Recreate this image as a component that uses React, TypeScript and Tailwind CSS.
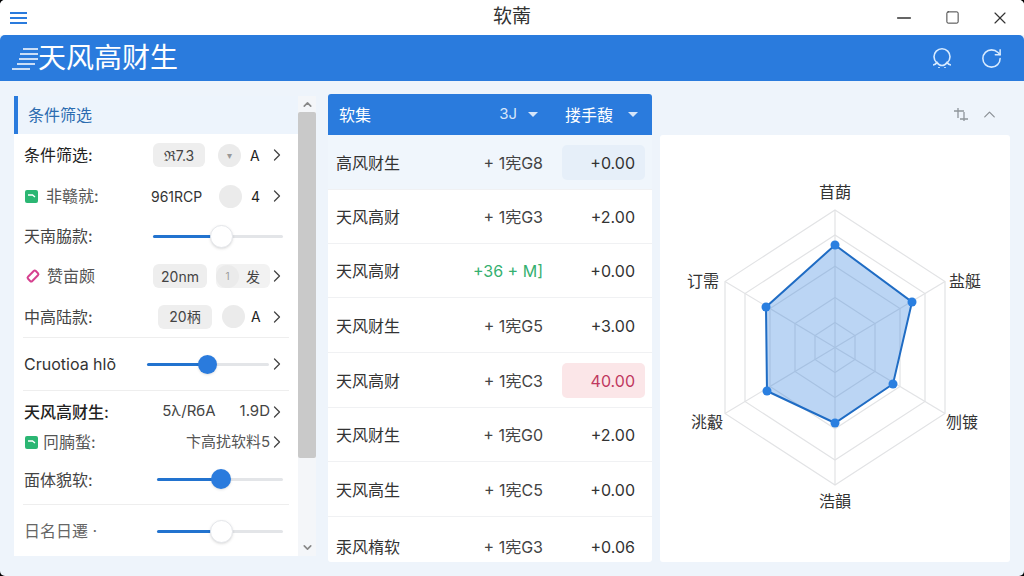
import { ChevronDown, ChevronRight, ChevronUp, Minus, RotateCw, Square, X } from 'lucide-react'

const FONT = "font-['Inter','Noto_Sans_CJK_SC',sans-serif]"

function Slider({ width, fill, thumb }: { width: string; fill: string; thumb: 'white' | 'blue' | 'blueSmall' }) {
  const thumbClass =
    thumb === 'white'
      ? 'w-[23px] h-[23px] -ml-[11px] -mt-[11px] bg-white border border-gray-200 shadow'
      : thumb === 'blue'
        ? 'w-[20px] h-[20px] -ml-[10px] -mt-[10px] bg-[#2a7bdd] shadow'
        : 'w-[19px] h-[19px] -ml-[9px] -mt-[9px] bg-[#2a7bdd] shadow'
  return (
    <div className={`relative h-[3px] rounded-full bg-[#e3e5e8] ${width}`}>
      <div className={`h-[3px] rounded-full bg-[#2273cf] ${fill}`} />
      <div className={`absolute top-[1px] rounded-full ${thumbClass} ${fill === 'w-[68px]' ? 'left-[68px]' : fill === 'w-[60px]' ? 'left-[60px]' : 'left-[64px]'}`} />
    </div>
  )
}

function Pill({ text, w }: { text: string; w: string }) {
  return <div className={`h-[24px] rounded-[6px] bg-[#eeeeee] text-[14px] text-[#444] flex items-center justify-center ${w}`}>{text}</div>
}

function Dot({ children }: { children?: React.ReactNode }) {
  return <div className="w-[23px] h-[23px] rounded-full bg-[#ebebeb] flex items-center justify-center text-[10px] text-[#999]">{children}</div>
}

function Chev() {
  return <ChevronRight className="w-[20px] h-[20px] -mx-[3px] text-[#444]" strokeWidth={1.5} />
}

function GreenIcon() {
  return (
    <svg width="13" height="13" viewBox="0 0 13 13" className="shrink-0">
      <rect width="13" height="13" rx="2" fill="#2bb673" />
      <path d="M3 5h4.5l2.5 2" stroke="#fff" strokeWidth="1.4" fill="none" />
    </svg>
  )
}

function FilterPanel() {
  return (
    <div className="mt-[2px] ml-[14px] w-[302px] h-[460px] flex bg-white overflow-hidden">
      <div className="w-[284px] flex flex-col text-[16px] text-[#333]">
        <div className="h-[38px] shrink-0 border-l-[4px] border-[#2a7bdd] bg-[#edf4fc] pl-[10px] flex items-center text-[#2c6cb0]">条件筛选</div>

        <div className="h-[42px] shrink-0 pl-[10px] pr-[14px] flex items-center">
          <span className="flex-1 text-[#222]">条件筛选:</span>
          <Pill text="ℜ7.3" w="w-[52px]" />
          <div className="ml-[13px] w-[24px]"><Dot>▾</Dot></div>
          <span className="w-[28px] pl-[8px] text-[14px] text-[#222]">A</span>
          <Chev />
        </div>

        <div className="h-[40px] shrink-0 pl-[11px] pr-[14px] flex items-center">
          <GreenIcon />
          <span className="flex-1 ml-[8px] text-[#555]">非赣就:</span>
          <span className="w-[68px] text-[14px] text-[#333]">961RCP</span>
          <Dot />
          <span className="w-[28px] pl-[9px] text-[14px] text-[#222]">4</span>
          <Chev />
        </div>

        <div className="h-[40px] shrink-0 pl-[10px] pr-[15px] flex items-center">
          <span className="flex-1 text-[#444]">天南脇款:</span>
          <Slider width="w-[130px]" fill="w-[68px]" thumb="white" />
        </div>

        <div className="h-[40px] shrink-0 pl-[11px] pr-[14px] flex items-center">
          <svg width="16" height="16" viewBox="0 0 16 16" className="shrink-0">
            <rect x="2.5" y="5" width="11" height="6" rx="1.5" transform="rotate(-45 8 8)" fill="none" stroke="#d6418f" strokeWidth="2" />
          </svg>
          <span className="flex-1 ml-[6px] text-[#555]">赞亩颇</span>
          <Pill text="20nm" w="w-[54px]" />
          <div className="ml-[9px] w-[54px] h-[24px] rounded-[6px] bg-[#f2f2f2] flex items-center">
            <Dot>1</Dot>
            <span className="ml-[7px] text-[14px] text-[#444]">发</span>
          </div>
          <Chev />
        </div>

        <div className="h-[41px] shrink-0 pl-[10px] pr-[14px] flex items-center border-b-0">
          <span className="flex-1 text-[#444]">中高陆款:</span>
          <Pill text="20柄" w="w-[54px]" />
          <div className="ml-[10px]"><Dot /></div>
          <span className="w-[25px] pl-[6px] text-[14px] text-[#222]">A</span>
          <Chev />
        </div>

        <div className="mx-[9px] h-px bg-[#eeeeee] shrink-0" />

        <div className="h-[52px] shrink-0 pl-[10px] pr-[14px] flex items-center">
          <span className="flex-1 text-[#333]">Cruotioa hlõ</span>
          <Slider width="w-[122px]" fill="w-[60px]" thumb="blueSmall" />
          <div className="ml-[1px]"><Chev /></div>
        </div>

        <div className="mx-[9px] h-px bg-[#eeeeee] shrink-0" />

        <div className="h-[41px] shrink-0 pl-[10px] pr-[14px] flex items-center">
          <span className="flex-1 font-medium text-[#222]">天风高财生:</span>
          <span className="text-[15px] text-[#444]">5λ/RбA</span>
          <span className="ml-[24px] text-[15px] text-[#444]">1.9D</span>
          <Chev />
        </div>

        <div className="h-[20px] shrink-0 pl-[11px] pr-[14px] flex items-center">
          <GreenIcon />
          <span className="flex-1 ml-[5px] text-[#555]">冋腩蝵:</span>
          <span className="text-[15px] text-[#555]">卞高扰软料5</span>
          <Chev />
        </div>

        <div className="h-[52px] shrink-0 pt-[3px] pl-[10px] pr-[15px] flex items-center">
          <span className="flex-1 text-[#444]">面体貌软:</span>
          <Slider width="w-[126px]" fill="w-[64px]" thumb="blue" />
        </div>

        <div className="mx-[9px] h-px bg-[#eeeeee] shrink-0" />

        <div className="h-[52px] shrink-0 pl-[10px] pr-[15px] flex items-center">
          <span className="flex-1 text-[#666]">日名日遷 ·</span>
          <Slider width="w-[126px]" fill="w-[64px]" thumb="white" />
        </div>
      </div>

      <div className="w-[18px] bg-[#f4f6f9] flex flex-col items-center">
        <ChevronUp className="w-[13px] h-[13px] mt-[2px] text-[#888] shrink-0" strokeWidth={3} />
        <div className="w-full h-[346px] mt-[1px] rounded-[2px] bg-[#c9c9c9] shrink-0" />
        <ChevronDown className="w-[13px] h-[13px] mt-auto mb-[2px] text-[#888] shrink-0" strokeWidth={3} />
      </div>
    </div>
  )
}

const rows = [
  { name: '高风财生', mid: '+ 1宪G8', value: '+0.00', h: 'h-[54px]' },
  { name: '天风高财', mid: '+ 1宪G3', value: '+2.00', h: 'h-[54px]' },
  { name: '天风高财', mid: '+36 + M]', value: '+0.00', h: 'h-[54px]' },
  { name: '天风财生', mid: '+ 1宪G5', value: '+3.00', h: 'h-[55px]' },
  { name: '天风高财', mid: '+ 1宪C3', value: '40.00', h: 'h-[55px]' },
  { name: '天风财生', mid: '+ 1宪G0', value: '+2.00', h: 'h-[54px]' },
  { name: '天风高生', mid: '+ 1宪C5', value: '+0.00', h: 'h-[55px]' },
  { name: '汞风楕软', mid: '+ 1宪G3', value: '+0.06', h: 'h-[60px]' }
]

function DataTable() {
  return (
    <div className="ml-[12px] w-[324px] h-[468px] flex flex-col bg-white rounded-[3px] overflow-hidden">
      <div className="h-[41px] shrink-0 bg-[#2a7bdd] text-white flex items-center pl-[11px] pr-[14px] text-[16px]">
        <span className="flex-1">软集</span>
        <span className="text-[15px] text-[#d5e6fa]">3J</span>
        <svg width="10" height="6" viewBox="0 0 10 6" className="ml-[11px]"><path d="M0 0h10L5 5z" fill="#d5e6fa" /></svg>
        <span className="ml-[27px]">搂手馥</span>
        <svg width="10" height="6" viewBox="0 0 10 6" className="ml-[15px]"><path d="M0 0h10L5 5z" fill="#d5e6fa" /></svg>
      </div>
      {rows.map((row, i) => (
        <div
          key={i}
          className={`${row.h} shrink-0 flex items-center pl-[8px] pr-[7px] pt-[1px] text-[#333] ${i === 0 ? 'bg-[#f0f6fc]' : 'border-t border-[#f0f1f3]'}`}
        >
          <span className="flex-1 text-[16px]">{row.name}</span>
          <span className={`w-[100px] text-right text-[16px] ${i === 2 ? 'text-[#35b06f]' : 'text-[#444]'}`}>{row.mid}</span>
          <div
            className={`ml-[19px] w-[83px] h-[35px] rounded-[5px] pr-[10px] flex items-center justify-end text-[16px] ${
              i === 0 ? 'bg-[#e6eff9]' : i === 4 ? 'bg-[#fbe6e8] text-[#c0395f]' : ''
            }`}
          >
            {row.value}
          </div>
        </div>
      ))}
    </div>
  )
}

const CX = 835
const CY = 347.5
const RING_W = [20, 40, 65, 90, 110]

function hexPoints(w: number) {
  const h = w * 1.25
  const s = w * 0.6
  return [
    [CX, CY - h],
    [CX + w, CY - s],
    [CX + w, CY + s],
    [CX, CY + h],
    [CX - w, CY + s],
    [CX - w, CY - s]
  ]
}

const DATA = [
  [835, 245],
  [912, 302],
  [893, 384],
  [835, 423],
  [767, 391],
  [766, 307]
]

const LABELS = [
  { text: '苜蓢', x: 835, y: 198 },
  { text: '盐艇', x: 965, y: 287 },
  { text: '刎镀', x: 962, y: 428 },
  { text: '浩韻', x: 835, y: 507 },
  { text: '洮觳', x: 707, y: 428 },
  { text: '订需', x: 703, y: 287 }
]

function RadarPanel() {
  return (
    <div className="ml-[8px] w-[350px] flex flex-col h-[468px]">
      <div className="h-[41px] shrink-0 flex items-center justify-end gap-[12px] pr-[11px]">
        <svg width="14" height="16" viewBox="0 0 14 16" fill="none" stroke="#8f959b" strokeWidth="1.3">
          <path d="M4 1v10M0 4h10M10 5v9M6 12h8" />
        </svg>
        <ChevronUp className="w-[19px] h-[19px] text-[#8a8f94]" strokeWidth={1.5} />
      </div>
      <div className="flex-1 bg-white rounded-[3px]">
        <svg width="350" height="427" viewBox="660 135 350 427">
          {RING_W.map((w) => (
            <polygon key={w} points={hexPoints(w).map((p) => p.join(',')).join(' ')} fill="none" stroke="#e2e3e5" strokeWidth="1.2" />
          ))}
          {hexPoints(110).map((p, i) => (
            <line key={i} x1={CX} y1={CY} x2={p[0]} y2={p[1]} stroke="#e2e3e5" strokeWidth="1.2" />
          ))}
          <polygon points={DATA.map((p) => p.join(',')).join(' ')} fill="#2a7bdd" fillOpacity="0.32" stroke="#1f6cc4" strokeWidth="2" />
          {DATA.map((p, i) => (
            <circle key={i} cx={p[0]} cy={p[1]} r="4.5" fill="#2a7fe0" />
          ))}
          {LABELS.map((l) => (
            <text key={l.text} x={l.x} y={l.y} textAnchor="middle" fontSize="16" fill="#333">
              {l.text}
            </text>
          ))}
        </svg>
      </div>
    </div>
  )
}

export default function App() {
  return (
    <div className={`w-[1024px] h-[576px] bg-black overflow-hidden ${FONT}`}>
      <div className="w-full h-full rounded-[5px] bg-[#eef4fb] overflow-hidden flex flex-col">
        <div className="h-[35px] shrink-0 bg-white flex items-center">
          <div className="w-[150px] pl-[10px]">
            <div className="w-[17px] flex flex-col gap-[3px]">
              <div className="h-[2px] bg-[#2a7bdd]" />
              <div className="h-[2px] bg-[#2a7bdd]" />
              <div className="h-[2px] bg-[#2a7bdd]" />
            </div>
          </div>
          <span className="flex-1 text-center text-[19px] text-[#333]">软萳</span>
          <div className="w-[150px] flex items-center justify-end gap-[30px] pr-[14px] text-[#333]">
            <Minus className="w-[22px] h-[22px]" strokeWidth={1.4} />
            <Square className="w-[15px] h-[15px]" strokeWidth={1.5} />
            <X className="w-[20px] h-[20px]" strokeWidth={1.4} />
          </div>
        </div>

        <div className="h-[46px] shrink-0 bg-[#2a7bdd] rounded-t-[5px] flex items-center text-white">
          <svg width="28" height="28" viewBox="0 0 28 28" fill="none" stroke="#fff" strokeWidth="1.4" className="ml-[11px] shrink-0">
            <path d="M12 5h15M9 10h18M8 15h19M6 20h18M1 25h18" />
          </svg>
          <span className="ml-[-1px] text-[28px] leading-none">天风高财生</span>
          <div className="ml-auto flex items-center gap-[26px] pr-[21px]">
            <svg width="24" height="24" viewBox="0 0 24 24" fill="none" stroke="#d8ebff" strokeWidth="1.6">
              <path d="M6.5 16.5a8 8 0 1 1 11 0" />
              <path d="M3 19c2 0 3-1 4-2.5 1 1.5 2 3 5 3s4-1.500 5-3c1 1.500 2 2.500 4 2.500" />
              <path d="M9 21v1M15 21v1" />
            </svg>
            <RotateCw className="w-[23px] h-[23px] text-[#d8ebff]" strokeWidth={1.6} />
          </div>
        </div>

        <div className="flex-1 pt-[13px] flex items-start">
          <FilterPanel />
          <DataTable />
          <RadarPanel />
        </div>
      </div>
    </div>
  )
}
